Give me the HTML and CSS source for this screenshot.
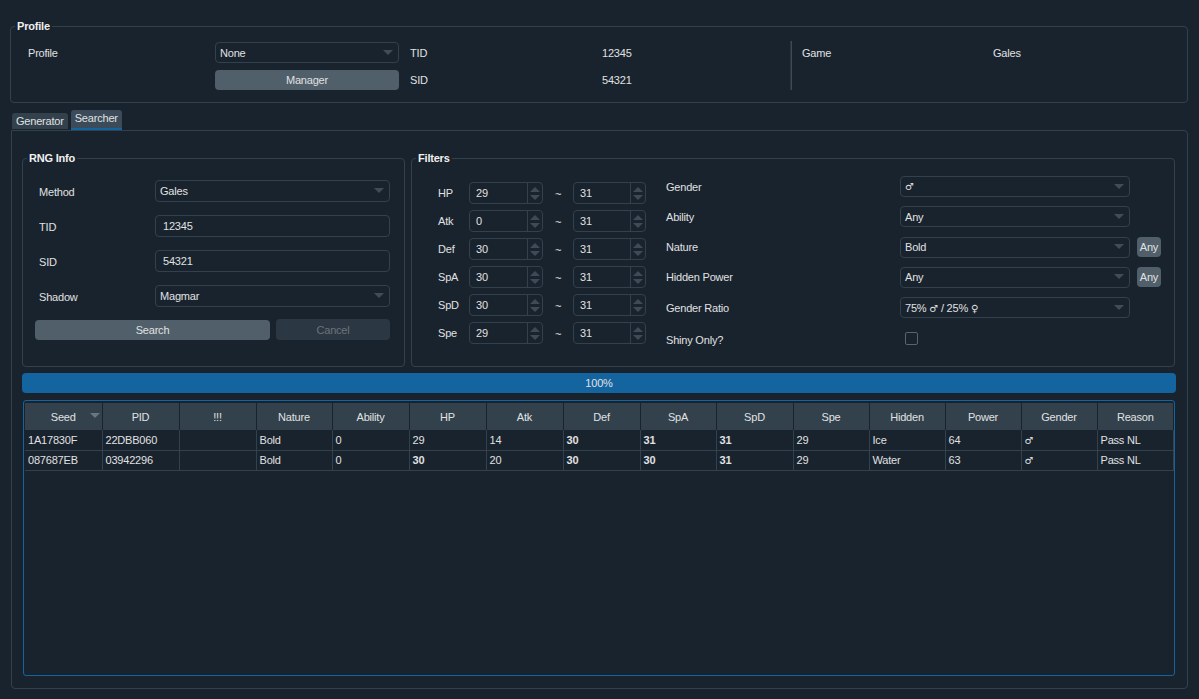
FILE: index.html
```html
<!DOCTYPE html>
<html>
<head>
<meta charset="utf-8">
<title>Gales Searcher</title>
<link rel="stylesheet" href="styles.css">
</head>
<body>
<div class="app">
  <fieldset class="group profile">
    <legend>Profile</legend>
    <div class="profile-body">
      <div class="profile-grid">
        <span class="lbl">Profile</span>
        <div class="combo"><span>None</span><i class="arrow"></i></div>
        <span class="lbl tid">TID</span>
        <span class="lbl">12345</span>
        <span></span>
        <button class="btn">Manager</button>
        <span class="lbl tid">SID</span>
        <span class="lbl">54321</span>
      </div>
      <div class="vsep"></div>
      <div class="profile-game">
        <span class="lbl">Game</span>
        <span class="lbl">Gales</span>
      </div>
    </div>
  </fieldset>

  <div class="tabs">
    <div class="tab">Generator</div>
    <div class="tab active">Searcher</div>
  </div>

  <div class="pane">
    <div class="search-row">
      <fieldset class="group rng">
        <legend>RNG Info</legend>
        <div class="rng-grid">
          <span class="lbl">Method</span>
          <div class="combo tall"><span>Gales</span><i class="arrow"></i></div>
          <span class="lbl">TID</span>
          <div class="input">12345</div>
          <span class="lbl">SID</span>
          <div class="input">54321</div>
          <span class="lbl">Shadow</span>
          <div class="combo tall"><span>Magmar</span><i class="arrow"></i></div>
          <div class="btn-row">
            <button class="btn search">Search</button>
            <button class="btn cancel">Cancel</button>
          </div>
        </div>
      </fieldset>

      <fieldset class="group filters">
        <legend>Filters</legend>
        <div class="filters-body">
          <div class="iv-grid">
            <span class="lbl">HP</span>
            <div class="spin"><span class="spin-val">29</span><span class="spin-btns"><i class="up"></i><i class="down"></i></span></div>
            <span class="tilde">~</span>
            <div class="spin"><span class="spin-val">31</span><span class="spin-btns"><i class="up"></i><i class="down"></i></span></div>

            <span class="lbl">Atk</span>
            <div class="spin"><span class="spin-val">0</span><span class="spin-btns"><i class="up"></i><i class="down"></i></span></div>
            <span class="tilde">~</span>
            <div class="spin"><span class="spin-val">31</span><span class="spin-btns"><i class="up"></i><i class="down"></i></span></div>

            <span class="lbl">Def</span>
            <div class="spin"><span class="spin-val">30</span><span class="spin-btns"><i class="up"></i><i class="down"></i></span></div>
            <span class="tilde">~</span>
            <div class="spin"><span class="spin-val">31</span><span class="spin-btns"><i class="up"></i><i class="down"></i></span></div>

            <span class="lbl">SpA</span>
            <div class="spin"><span class="spin-val">30</span><span class="spin-btns"><i class="up"></i><i class="down"></i></span></div>
            <span class="tilde">~</span>
            <div class="spin"><span class="spin-val">31</span><span class="spin-btns"><i class="up"></i><i class="down"></i></span></div>

            <span class="lbl">SpD</span>
            <div class="spin"><span class="spin-val">30</span><span class="spin-btns"><i class="up"></i><i class="down"></i></span></div>
            <span class="tilde">~</span>
            <div class="spin"><span class="spin-val">31</span><span class="spin-btns"><i class="up"></i><i class="down"></i></span></div>

            <span class="lbl">Spe</span>
            <div class="spin"><span class="spin-val">29</span><span class="spin-btns"><i class="up"></i><i class="down"></i></span></div>
            <span class="tilde">~</span>
            <div class="spin"><span class="spin-val">31</span><span class="spin-btns"><i class="up"></i><i class="down"></i></span></div>
          </div>

          <div class="opt-grid">
            <span class="lbl">Gender</span>
            <div class="combo"><span class="sym">♂</span><i class="arrow"></i></div>
            <span></span>

            <span class="lbl">Ability</span>
            <div class="combo"><span>Any</span><i class="arrow"></i></div>
            <span></span>

            <span class="lbl">Nature</span>
            <div class="combo"><span>Bold</span><i class="arrow"></i></div>
            <button class="btn any">Any</button>

            <span class="lbl">Hidden Power</span>
            <div class="combo"><span>Any</span><i class="arrow"></i></div>
            <button class="btn any">Any</button>

            <span class="lbl">Gender Ratio</span>
            <div class="combo"><span>75% <span class="sym">♂</span> / 25% <span class="sym">♀</span></span><i class="arrow"></i></div>
            <span></span>

            <span class="lbl shiny">Shiny Only?</span>
            <div class="check-cell"><span class="checkbox"></span></div>
            <span></span>
          </div>
        </div>
      </fieldset>
    </div>

    <div class="progress">100%</div>

    <div class="table-wrap">
      <table class="results">
        <colgroup>
          <col><col><col><col><col><col><col><col><col><col><col><col><col><col><col>
        </colgroup>
        <thead>
          <tr>
            <th class="sorted">Seed<i class="sort"></i></th>
            <th>PID</th>
            <th>!!!</th>
            <th>Nature</th>
            <th>Ability</th>
            <th>HP</th>
            <th>Atk</th>
            <th>Def</th>
            <th>SpA</th>
            <th>SpD</th>
            <th>Spe</th>
            <th>Hidden</th>
            <th>Power</th>
            <th>Gender</th>
            <th>Reason</th>
          </tr>
        </thead>
        <tbody>
          <tr>
            <td>1A17830F</td><td>22DBB060</td><td></td><td>Bold</td><td>0</td>
            <td>29</td><td>14</td><td class="b">30</td><td class="b">31</td><td class="b">31</td>
            <td>29</td><td>Ice</td><td>64</td><td class="sym">♂</td><td>Pass NL</td>
          </tr>
          <tr>
            <td>087687EB</td><td>03942296</td><td></td><td>Bold</td><td>0</td>
            <td class="b">30</td><td>20</td><td class="b">30</td><td class="b">30</td><td class="b">31</td>
            <td>29</td><td>Water</td><td>63</td><td class="sym">♂</td><td>Pass NL</td>
          </tr>
        </tbody>
      </table>
    </div>
  </div>
</div>
</body>
</html>
```

FILE: styles.css
```css
* { box-sizing: border-box; }

html, body {
  margin: 0;
  padding: 0;
  background: #19232d;
}

body {
  font-family: "Liberation Sans", Arial, sans-serif;
  font-size: 11px;
  letter-spacing: -0.2px;
  color: #e0e1e3;
  width: 1199px;
  height: 699px;
  overflow: hidden;
}

.app {
  padding-top: 20px;
}

/* group boxes */
.group {
  margin: 0;
  padding: 0;
  border: 1px solid #32414b;
  border-radius: 4px;
  min-width: 0;
}

.group > legend {
  margin-left: 4px;
  padding: 0 2px;
  font-weight: bold;
  line-height: 13px;
  height: 13px;
  color: #f0f0f0;
}

.lbl {
  display: flex;
  align-items: center;
  white-space: nowrap;
}

/* profile */
.profile {
  margin-left: 10px;
  width: 1178px;
}

.profile-body {
  display: flex;
  padding: 9px 0 12px 17px;
}

.profile-grid {
  display: grid;
  grid-template-columns: 187px 184px 203px 188px;
  grid-template-rows: 21px 20px;
  row-gap: 7px;
}

.profile-grid .tid {
  padding-left: 11px;
}

.vsep {
  width: 2px;
  margin-top: -1px;
  border-left: 1px solid #2a3540;
  border-right: 1px solid #3d4a56;
}

.profile-game {
  display: grid;
  grid-template-columns: 191px 100px;
  grid-template-rows: 21px;
  margin-left: 10px;
}

/* combos & inputs */
.combo {
  position: relative;
  display: flex;
  align-items: center;
  height: 21px;
  padding-left: 4px;
  border: 1px solid #32414b;
  border-radius: 4px;
  background: #19232d;
  white-space: nowrap;
}

.combo.tall { height: 22px; }

.combo .arrow {
  position: absolute;
  right: 5px;
  top: 50%;
  margin-top: -3px;
  width: 0;
  height: 0;
  border-left: 5px solid transparent;
  border-right: 5px solid transparent;
  border-top: 5px solid #404d59;
}

.input {
  display: flex;
  align-items: center;
  height: 22px;
  padding-left: 7px;
  border: 1px solid #32414b;
  border-radius: 4px;
}

.sym {
  font-family: "DejaVu Sans", sans-serif;
  font-size: 10px;
  font-weight: normal;
}

.btn {
  font: inherit;
  letter-spacing: inherit;
  color: #e0e1e3;
  background: #505f69;
  border: none;
  border-radius: 4px;
  padding: 0;
  margin: 0;
}

/* tabs */
.tabs {
  display: flex;
  align-items: flex-end;
  gap: 3px;
  height: 20px;
  margin: 7px 0 0 12px;
}

.tab {
  height: 16px;
  line-height: 16px;
  padding: 0 4px;
  margin-bottom: 1px;
  background: #32414b;
  border-radius: 3px 3px 0 0;
}

.tab.active {
  height: 20px;
  line-height: 17px;
  margin-bottom: 0;
  background: #3b4b59;
  border-bottom: 2px solid #1464a0;
}

.pane {
  margin-left: 11px;
  width: 1177px;
  border: 1px solid #32414b;
  border-radius: 0 4px 4px 4px;
  padding: 21px 11px 12px 10px;
}

.search-row {
  display: flex;
  gap: 6px;
  align-items: stretch;
}

/* RNG info */
.rng {
  width: 383px;
}

.rng-grid {
  display: grid;
  grid-template-columns: 116px 235px;
  grid-auto-rows: 22px;
  row-gap: 13px;
  padding: 15px 0 0 16px;
}

.rng-grid .lbl { padding-top: 1px; }

.btn-row {
  grid-column: 1 / 3;
  display: flex;
  gap: 6px;
  margin-left: -4px;
  height: 20px;
}

.btn.search {
  width: 235px;
  height: 20px;
}

.btn.cancel {
  width: 114px;
  height: 21px;
  margin-top: -1px;
  background: #2b3843;
  color: #6a737b;
}

/* filters */
.filters {
  width: 764px;
}

.filters-body {
  display: flex;
  align-items: flex-start;
  padding: 11px 0 18px 26px;
}

.iv-grid {
  display: grid;
  grid-template-columns: 31px 74px 30px 73px;
  grid-auto-rows: 22px;
  row-gap: 6px;
  margin-top: 6px;
}

.tilde {
  display: flex;
  align-items: center;
  justify-content: center;
  padding-top: 2px;
}

.spin {
  display: flex;
  border: 1px solid #32414b;
  border-radius: 4px;
}

.spin-val {
  flex: 1;
  display: flex;
  align-items: center;
  padding-left: 6px;
}

.spin-btns {
  width: 15px;
  border-left: 1px solid #32414b;
  display: flex;
  flex-direction: column;
  align-items: center;
  justify-content: center;
  gap: 3px;
}

.spin-btns i {
  width: 0;
  height: 0;
  border-left: 5px solid transparent;
  border-right: 5px solid transparent;
}

.spin-btns .up { border-bottom: 5px solid #3e4a56; }
.spin-btns .down { border-top: 5px solid #3e4a56; }

.opt-grid {
  display: grid;
  grid-template-columns: 234px 230px 31px;
  grid-auto-rows: 21px;
  row-gap: 9.25px;
  margin-left: 20px;
}

.opt-grid .shiny { padding-top: 4px; }

.btn.any {
  width: 24px;
  height: 20px;
  margin-left: 7px;
  align-self: center;
}

.check-cell {
  display: flex;
  align-items: center;
  padding-left: 5px;
  padding-top: 1px;
}

.checkbox {
  width: 13px;
  height: 13px;
  border: 1px solid #57636e;
  border-radius: 2px;
}

/* progress */
.progress {
  margin-top: 6px;
  height: 20px;
  line-height: 20px;
  text-align: center;
  background: #1464a0;
  border-radius: 4px;
}

/* table */
.table-wrap {
  margin: 7px 0 0 1px;
  width: 1152px;
  height: 276px;
  border: 1px solid #1464a0;
  border-radius: 3px;
  padding: 2px 1px;
}

.results {
  table-layout: fixed;
  border-collapse: collapse;
  width: 1148px;
}

.results col { width: 76px; }
.results col:nth-child(1),
.results col:nth-child(2),
.results col:nth-child(3),
.results col:nth-child(5),
.results col:nth-child(6),
.results col:nth-child(7),
.results col:nth-child(8),
.results col:nth-child(10) { width: 77px; }

.results th {
  position: relative;
  height: 27px;
  padding: 0;
  font-weight: normal;
  text-align: center;
  background: #32414b;
  border-right: 1px solid #19232d;
}

.results th:last-child { border-right: none; }

.results th .sort {
  position: absolute;
  right: 2px;
  top: 10px;
  width: 0;
  height: 0;
  border-left: 5px solid transparent;
  border-right: 5px solid transparent;
  border-top: 5px solid #6b7680;
}

.results td {
  height: 20px;
  padding: 0 0 0 3px;
  border-right: 1px solid #32414b;
  border-bottom: 1px solid #32414b;
  white-space: nowrap;
}

.results td.b { font-weight: bold; }
```
